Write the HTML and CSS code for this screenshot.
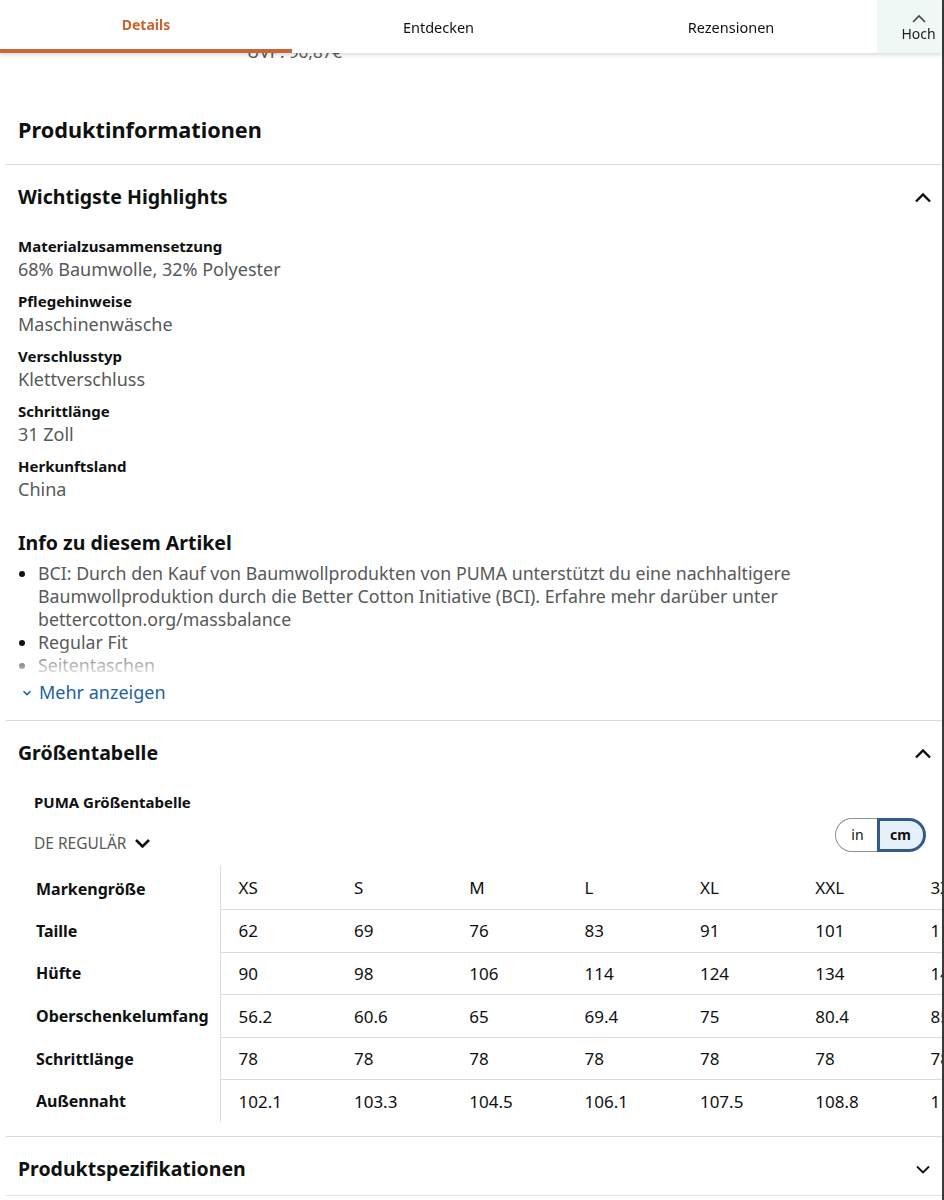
FILE: index.html
```html
<!DOCTYPE html>
<html lang="de">
<head>
  <meta charset="UTF-8" />
  <meta name="viewport" content="width=device-width, initial-scale=1.0" />
  <title>Produktinformationen</title>
  <link rel="stylesheet" href="styles.css">
</head>
<body>
  <nav class="tabs">
    <a class="tab active" href="#details">Details</a>
    <a class="tab" href="#entdecken">Entdecken</a>
    <a class="tab" href="#rezensionen">Rezensionen</a>
    <a class="tab top-link" href="#top">
      <svg width="14" height="9" viewBox="0 0 14 9"><polyline points="1,8 7,2 13,8" fill="none" stroke="#444" stroke-width="1.6"/></svg>
      <span>Hoch</span>
    </a>
  </nav>

  <div class="page">
    <p class="old-price">UVP: 96,87€</p>

    <h2 class="page-title">Produktinformationen</h2>

    <section class="panel" id="details">
      <div class="panel-head">
        <h3>Wichtigste Highlights</h3>
        <svg class="chevron" width="18" height="11" viewBox="0 0 18 11"><polyline points="2,9.5 9,2.5 16,9.5" fill="none" stroke="#0f1111" stroke-width="2.4"/></svg>
      </div>

      <dl class="facts">
        <div class="fact"><dt>Materialzusammensetzung</dt><dd>68% Baumwolle, 32% Polyester</dd></div>
        <div class="fact"><dt>Pflegehinweise</dt><dd>Maschinenwäsche</dd></div>
        <div class="fact"><dt>Verschlusstyp</dt><dd>Klettverschluss</dd></div>
        <div class="fact"><dt>Schrittlänge</dt><dd>31 Zoll</dd></div>
        <div class="fact"><dt>Herkunftsland</dt><dd>China</dd></div>
      </dl>

      <h3 class="sub-title">Info zu diesem Artikel</h3>
      <div class="bullets">
        <ul>
          <li>BCI: Durch den Kauf von Baumwollprodukten von PUMA unterstützt du eine nachhaltigere Baumwollproduktion durch die Better Cotton Initiative (BCI). Erfahre mehr darüber unter bettercotton.org/massbalance</li>
          <li>Regular Fit</li>
          <li>Seitentaschen</li>
        </ul>
      </div>
      <a class="more-link" href="#mehr">
        <svg width="10" height="6" viewBox="0 0 10 6"><polyline points="1.5,1.2 5,4.6 8.5,1.2" fill="none" stroke="#2162a1" stroke-width="1.6"/></svg>
        Mehr anzeigen
      </a>
    </section>

    <section class="panel chart">
      <div class="panel-head">
        <h3>Größentabelle</h3>
        <svg class="chevron" width="18" height="11" viewBox="0 0 18 11"><polyline points="2,9.5 9,2.5 16,9.5" fill="none" stroke="#0f1111" stroke-width="2.4"/></svg>
      </div>

      <div class="chart-head">
        <h4>PUMA Größentabelle</h4>
        <div class="chart-controls">
          <button class="region">DE REGULÄR
            <svg width="17" height="11" viewBox="0 0 17 11"><polyline points="2,2 8.5,8.5 15,2" fill="none" stroke="#0f1111" stroke-width="2.6"/></svg>
          </button>
          <div class="units">
            <button class="unit">in</button>
            <button class="unit selected">cm</button>
          </div>
        </div>
      </div>

      <div class="table-wrap">
        <table class="sizes">
          <tr><th>Markengröße</th><td>XS</td><td>S</td><td>M</td><td>L</td><td>XL</td><td>XXL</td><td>3XL</td></tr>
          <tr><th>Taille</th><td>62</td><td>69</td><td>76</td><td>83</td><td>91</td><td>101</td><td>111</td></tr>
          <tr><th>Hüfte</th><td>90</td><td>98</td><td>106</td><td>114</td><td>124</td><td>134</td><td>144</td></tr>
          <tr><th>Oberschenkelumfang</th><td>56.2</td><td>60.6</td><td>65</td><td>69.4</td><td>75</td><td>80.4</td><td>85.8</td></tr>
          <tr><th>Schrittlänge</th><td>78</td><td>78</td><td>78</td><td>78</td><td>78</td><td>78</td><td>78</td></tr>
          <tr><th>Außennaht</th><td>102.1</td><td>103.3</td><td>104.5</td><td>106.1</td><td>107.5</td><td>108.8</td><td>110.2</td></tr>
        </table>
      </div>
    </section>

    <section class="panel closed">
      <div class="panel-head">
        <h3>Produktspezifikationen</h3>
        <svg class="chevron" width="18" height="11" viewBox="0 0 18 11"><polyline points="3,2.5 9,8.5 15,2.5" fill="none" stroke="#0f1111" stroke-width="1.8"/></svg>
      </div>
    </section>
  </div>
</body>
</html>
```

FILE: styles.css
```css
body {
  margin: 0;
  font-family: "Noto Sans", "Open Sans", Arial, sans-serif;
  color: #0f1111;
  background: #fff;
}
a {
  text-decoration: none;
}

/* sticky tab bar over the page */
.tabs {
  position: fixed;
  top: 0;
  left: 0;
  z-index: 5;
  width: 942px;
  height: 53px;
  display: grid;
  grid-template-columns: 292px 293px 292px 1fr;
  background: #fff;
  box-shadow: 0 2px 4px rgba(0, 0, 0, 0.14);
}
.tab {
  display: flex;
  align-items: center;
  justify-content: center;
  font-size: 14.5px;
  color: #0f1111;
  padding-top: 1px;
}
.tab.active {
  color: #c9622f;
  font-weight: 700;
  font-size: 14px;
  border-bottom: 4px solid #cc6536;
  padding-top: 0;
}
.top-link {
  flex-direction: column;
  gap: 1px;
  background: #eff8f5;
  font-size: 14px;
  color: #222;
  padding: 4px 0 0 18px;
}

.page {
  width: 942px;
  border-right: 2px solid #3a3a3a;
  padding-top: 40px;
  min-height: 1160px;
}
.old-price {
  margin: 0 0 0 247px;
  font-size: 17px;
  line-height: 24px;
  color: #565959;
  text-decoration: line-through;
}
.page-title {
  margin: 52px 0 20px 18px;
  font-size: 21.7px;
  line-height: 28px;
}

.panel {
  margin-left: 6px;
  padding-left: 12px;
  border-top: 1px solid #dcdcdc;
}
.panel.closed {
  border-bottom: 1px solid #e3e3e3;
  padding-bottom: 13px;
}
.panel-head {
  display: flex;
  align-items: center;
  justify-content: space-between;
  padding: 19px 10px 0 0;
}
.panel-head h3 {
  margin: 0;
  font-size: 19.5px;
  line-height: 26px;
}

.facts {
  margin: 27px 0 0;
  display: flex;
  flex-direction: column;
  gap: 11px;
}
.fact dt {
  font-size: 15px;
  line-height: 18px;
  font-weight: 700;
}
.fact dd {
  margin: 2px 0 0;
  font-size: 18px;
  line-height: 24px;
  color: #565959;
}

.sub-title {
  margin: 29px 0 6px;
  font-size: 19.5px;
  line-height: 26px;
}
.bullets {
  position: relative;
  max-height: 113px;
  overflow: hidden;
}
.bullets::after {
  content: "";
  position: absolute;
  left: 0;
  right: 0;
  bottom: 0;
  height: 28px;
  background: linear-gradient(rgba(255, 255, 255, 0), rgba(255, 255, 255, 0.85));
}
.bullets ul {
  margin: 0;
  padding: 0 22px 0 20px;
  font-size: 17.75px;
  line-height: 23px;
  color: #565959;
}
.bullets li::marker {
  color: #0f1111;
}
.more-link {
  display: inline-flex;
  align-items: center;
  gap: 7px;
  margin: 6px 0 16px 4px;
  font-size: 18px;
  line-height: 23px;
  color: #2162a1;
}

/* size chart */
.chart {
  padding-bottom: 14px;
}
.chart-head {
  padding: 0 16px 0 16px;
}
.chart-head h4 {
  margin: 27px 0 7px;
  font-size: 15px;
  line-height: 18px;
}
.chart-controls {
  display: flex;
  align-items: flex-end;
  justify-content: space-between;
}
.region {
  display: flex;
  align-items: center;
  gap: 7px;
  padding: 0;
  border: 0;
  background: none;
  font-family: inherit;
  font-size: 15.5px;
  line-height: 18px;
  color: #565959;
}
.units {
  display: flex;
  height: 34px;
}
.unit {
  font-family: inherit;
  font-size: 14px;
  color: #0f1111;
  background: #fff;
  border: 1px solid #8d9096;
  border-right: 0;
  border-radius: 17px 0 0 17px;
  width: 42px;
  padding: 0 0 2px 2px;
}
.unit.selected {
  width: 49px;
  font-weight: 700;
  background: #e6f0f9;
  border: 3px solid #335b8a;
  border-radius: 0 17px 17px 0;
  padding: 0 2px 2px 0;
}

.table-wrap {
  margin-top: 14px;
  overflow: hidden;
}
.sizes {
  border-collapse: collapse;
  table-layout: fixed;
  width: 1010px;
}
.sizes th,
.sizes td {
  height: 41.6px;
  padding: 0 0 0 18px;
  text-align: left;
  white-space: nowrap;
}
.sizes th {
  width: 183px;
  font-size: 16px;
  font-weight: 700;
  border-right: 1px solid #dcdcdc;
}
.sizes td {
  width: 97px;
  font-size: 17px;
  border-bottom: 1px solid #dcdcdc;
}
.sizes tr:last-child td {
  border-bottom: 0;
}
.sizes tr:first-child th {
  padding-top: 2px;
}
```
